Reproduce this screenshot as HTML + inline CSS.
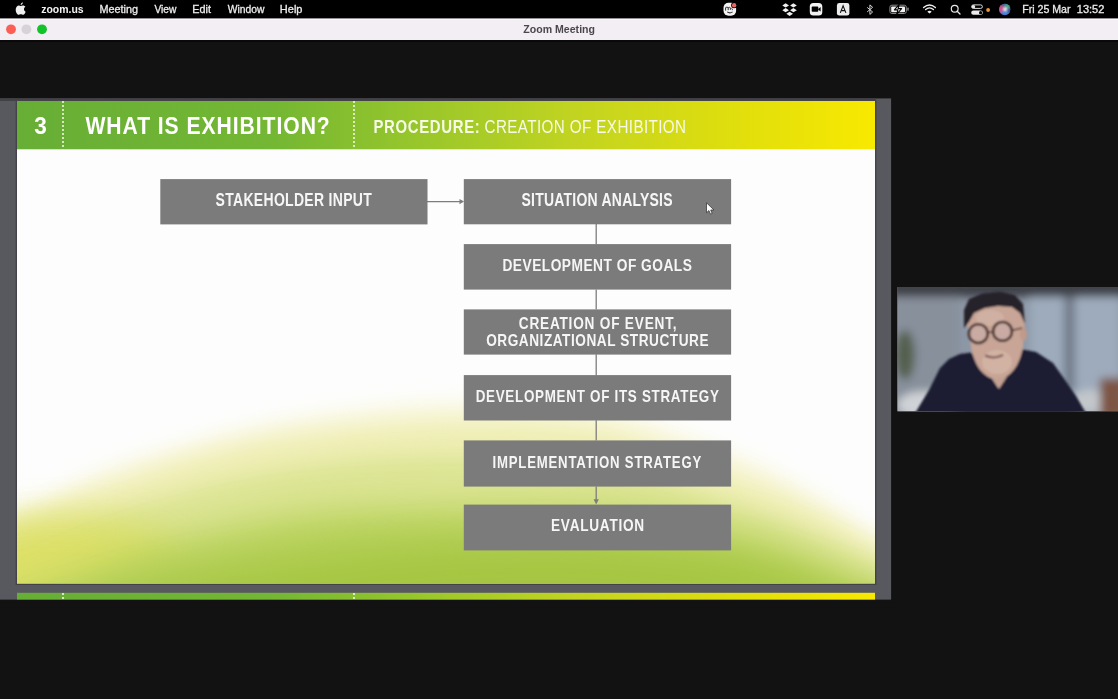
<!DOCTYPE html>
<html><head><meta charset="utf-8">
<style>
*{margin:0;padding:0}
html,body{width:1118px;height:699px;overflow:hidden;background:#121212}
svg{position:absolute;left:0;top:0;display:block}
text{font-family:"Liberation Sans",sans-serif;white-space:pre}
</style></head>
<body>
<svg width="1118" height="699" viewBox="0 0 1118 699">
<defs>
  <linearGradient id="hdrg" x1="17" y1="0" x2="875" y2="0" gradientUnits="userSpaceOnUse">
    <stop offset="0" stop-color="#67ae36"/>
    <stop offset="0.3" stop-color="#74b733"/>
    <stop offset="0.45" stop-color="#94c52c"/>
    <stop offset="0.65" stop-color="#c2d420"/>
    <stop offset="0.85" stop-color="#e2df0c"/>
    <stop offset="1" stop-color="#f8e900"/>
  </linearGradient>
  <filter id="blur30" x="-50%" y="-50%" width="200%" height="200%"><feGaussianBlur stdDeviation="30"/></filter>
  <filter id="blur18" x="-50%" y="-50%" width="200%" height="200%"><feGaussianBlur stdDeviation="18"/></filter>
  <filter id="blur10" x="-50%" y="-50%" width="200%" height="200%"><feGaussianBlur stdDeviation="10"/></filter>
  <filter id="blur4" x="-50%" y="-50%" width="200%" height="200%"><feGaussianBlur stdDeviation="4"/></filter>
  <filter id="blur2" x="-50%" y="-50%" width="200%" height="200%"><feGaussianBlur stdDeviation="2"/></filter>
  <filter id="blur1" x="-50%" y="-50%" width="200%" height="200%"><feGaussianBlur stdDeviation="1"/></filter>
  <filter id="blur13" x="-50%" y="-50%" width="200%" height="200%"><feGaussianBlur stdDeviation="1.2"/></filter>
  <filter id="noop" x="0" y="0" width="1118" height="699" filterUnits="userSpaceOnUse"><feGaussianBlur stdDeviation="0.3"/></filter>
  <clipPath id="slideclip"><rect x="17" y="101" width="858" height="482.3"/></clipPath>
  <clipPath id="vidclip"><rect x="897.5" y="287" width="220.5" height="124.3"/></clipPath>
</defs>
<rect x="0" y="0" width="1118" height="699" fill="#121212"/>
<!-- menubar -->
<rect x="0" y="0" width="1118" height="18.4" fill="#000"/>
<!-- titlebar -->
<rect x="0" y="18.4" width="1118" height="21.7" fill="#f2eef3"/>
<rect x="0" y="19.2" width="1118" height="0.8" fill="#fbf9fb"/>
<rect x="0" y="40.1" width="1118" height="1.6" fill="#070707"/>
<circle cx="11" cy="29.3" r="4.9" fill="#fc5d55"/>
<circle cx="26.4" cy="29.3" r="4.9" fill="#d7d2d7"/>
<circle cx="42" cy="29.3" r="4.9" fill="#12c229"/>

<!-- share frame -->
<rect x="0" y="98.4" width="891.1" height="501.4" fill="#58595e"/>
<rect x="0" y="98.4" width="876" height="2.6" fill="#414244"/>
<rect x="15.6" y="100" width="860.8" height="485" fill="#444349"/>
<g clip-path="url(#slideclip)">
  <rect x="17" y="101" width="858" height="482.3" fill="#fdfdfd"/>
  <path d="M-80.0,558.7 L-72.4,555.1 L-62.2,550.2 L-50.1,544.3 L-36.7,537.9 L-22.6,531.1 L-8.5,524.3 L4.9,517.8 L17.0,512.0 L27.9,506.6 L38.3,501.3 L48.4,496.2 L58.3,491.1 L68.2,486.1 L78.4,481.3 L88.9,476.6 L100.0,472.0 L111.7,467.5 L123.8,463.2 L136.3,459.0 L148.9,454.9 L161.8,450.9 L174.6,447.1 L187.4,443.5 L200.0,440.0 L212.2,436.7 L223.8,433.6 L235.3,430.7 L246.9,427.9 L258.8,425.3 L271.5,422.8 L285.1,420.3 L300.0,418.0 L316.4,415.6 L334.0,413.2 L352.6,410.9 L371.9,408.6 L391.6,406.6 L411.3,405.0 L430.9,403.7 L450.0,403.0 L468.9,402.7 L487.9,402.6 L507.1,402.8 L526.2,403.4 L545.1,404.4 L563.8,406.0 L582.2,408.2 L600.0,411.0 L617.7,414.8 L635.5,419.5 L653.2,425.0 L670.6,430.9 L687.3,437.1 L703.1,443.1 L717.7,448.9 L731.0,454.0 L742.6,458.5 L752.6,462.7 L761.3,466.7 L769.2,470.5 L776.7,474.3 L784.1,478.3 L791.7,482.5 L800.0,487.0 L808.7,491.8 L817.2,496.8 L825.7,501.9 L834.2,507.2 L843.0,512.6 L851.9,518.2 L861.2,524.0 L871.0,530.0 L881.9,536.6 L894.1,544.0 L907.0,551.8 L919.9,559.6 L932.4,567.2 L943.6,574.0 L953.0,579.7 L960.0,583.9 L960,740 L-80,740 Z" fill="#f8f6d8" filter="url(#blur10)" opacity="1"/>
<path d="M-80.0,568.1 L-72.4,564.8 L-62.2,560.4 L-50.1,555.1 L-36.7,549.3 L-22.6,543.2 L-8.5,537.1 L4.9,531.3 L17.0,526.0 L27.9,521.2 L38.3,516.5 L48.4,511.9 L58.3,507.4 L68.2,503.0 L78.4,498.6 L88.9,494.3 L100.0,490.0 L111.7,485.6 L123.8,481.3 L136.3,476.9 L148.9,472.6 L161.8,468.4 L174.6,464.3 L187.4,460.5 L200.0,457.0 L212.2,453.7 L223.8,450.7 L235.3,447.9 L246.9,445.2 L258.8,442.8 L271.5,440.4 L285.1,438.2 L300.0,436.0 L316.4,433.8 L334.0,431.7 L352.6,429.6 L371.9,427.7 L391.6,426.0 L411.3,424.6 L430.9,423.6 L450.0,423.0 L468.9,422.7 L487.9,422.7 L507.1,422.8 L526.2,423.4 L545.1,424.4 L563.8,425.9 L582.2,428.1 L600.0,431.0 L617.7,435.0 L635.5,440.0 L653.2,445.9 L670.6,452.2 L687.3,458.7 L703.1,465.1 L717.7,470.9 L731.0,476.0 L742.6,480.2 L752.6,483.9 L761.3,487.2 L769.2,490.3 L776.7,493.4 L784.1,496.6 L791.7,500.0 L800.0,504.0 L808.7,508.4 L817.2,512.9 L825.7,517.7 L834.2,522.6 L843.0,527.7 L851.9,533.0 L861.2,538.4 L871.0,544.0 L881.9,550.1 L894.1,557.0 L907.0,564.3 L919.9,571.6 L932.4,578.6 L943.6,584.9 L953.0,590.2 L960.0,594.1 L960,740 L-80,740 Z" fill="#eeeeb4" filter="url(#blur10)" opacity="1"/>
<path d="M-80.0,589.9 L-72.8,587.1 L-63.4,583.4 L-52.3,579.1 L-39.8,574.2 L-26.3,568.9 L-12.1,563.4 L2.5,557.7 L17.0,552.0 L31.8,546.1 L47.3,539.6 L63.5,532.7 L80.2,525.8 L97.3,518.8 L114.7,512.1 L132.3,505.7 L150.0,500.0 L167.9,494.7 L186.3,489.7 L205.0,484.9 L223.9,480.4 L243.0,476.3 L262.1,472.5 L281.1,469.0 L300.0,466.0 L318.8,463.4 L337.5,461.2 L356.2,459.3 L375.0,457.8 L393.8,456.6 L412.5,455.8 L431.2,455.3 L450.0,455.0 L468.9,455.0 L487.9,455.1 L507.1,455.6 L526.2,456.4 L545.1,457.5 L563.8,459.2 L582.2,461.3 L600.0,464.0 L617.7,467.5 L635.5,472.0 L653.2,477.0 L670.6,482.5 L687.3,488.1 L703.1,493.5 L717.7,498.6 L731.0,503.0 L742.6,506.7 L752.6,510.0 L761.3,513.0 L769.2,515.8 L776.7,518.6 L784.1,521.4 L791.7,524.5 L800.0,528.0 L808.7,531.8 L817.2,535.7 L825.7,539.7 L834.2,543.9 L843.0,548.2 L851.9,552.7 L861.2,557.3 L871.0,562.0 L881.9,567.2 L894.1,573.0 L907.0,579.2 L919.9,585.4 L932.4,591.4 L943.6,596.8 L953.0,601.3 L960.0,604.6 L960,740 L-80,740 Z" fill="#dde595" filter="url(#blur10)" opacity="1"/>
<ellipse cx="60" cy="572" rx="130" ry="55" fill="#dcdf62" filter="url(#blur18)" opacity="0.9"/>
<path d="M-80.0,637.9 L-72.8,635.1 L-63.4,631.4 L-52.3,627.1 L-39.8,622.2 L-26.3,616.9 L-12.1,611.4 L2.5,605.7 L17.0,600.0 L31.8,594.0 L47.3,587.5 L63.5,580.7 L80.2,573.7 L97.3,566.7 L114.7,560.0 L132.3,553.7 L150.0,548.0 L167.9,542.8 L186.3,537.8 L205.0,533.1 L223.9,528.7 L243.0,524.6 L262.1,521.0 L281.1,517.8 L300.0,515.0 L318.8,512.8 L337.5,511.2 L356.2,510.1 L375.0,509.3 L393.8,508.8 L412.5,508.5 L431.2,508.3 L450.0,508.0 L468.9,507.7 L488.1,507.5 L507.3,507.4 L526.6,507.4 L545.6,507.7 L564.3,508.2 L582.4,508.9 L600.0,510.0 L617.2,511.4 L634.2,513.2 L650.9,515.3 L667.2,517.6 L682.9,520.0 L697.9,522.6 L711.9,525.3 L725.0,528.0 L736.8,530.7 L747.4,533.6 L757.0,536.6 L765.9,539.6 L774.4,542.8 L782.7,546.1 L791.2,549.5 L800.0,553.0 L808.9,556.6 L817.6,560.3 L826.1,564.1 L834.6,568.1 L843.2,572.1 L852.1,576.3 L861.3,580.6 L871.0,585.0 L881.9,589.9 L894.1,595.4 L907.0,601.2 L919.9,607.1 L932.4,612.7 L943.6,617.7 L953.0,622.0 L960.0,625.1 L960,740 L-80,740 Z" fill="#b8d25c" filter="url(#blur18)" opacity="1"/>
<path d="M-80.0,651.5 L-73.1,649.6 L-64.6,647.3 L-54.5,644.5 L-42.9,641.4 L-29.9,637.8 L-15.6,633.9 L0.1,629.6 L17.0,625.0 L35.3,619.7 L55.1,613.7 L76.4,607.1 L98.9,600.2 L122.7,593.3 L147.5,586.6 L173.3,580.5 L200.0,575.0 L228.0,570.0 L257.8,565.2 L288.8,560.7 L320.8,556.4 L353.3,552.7 L385.9,549.4 L418.3,546.8 L450.0,545.0 L481.8,543.8 L514.4,543.2 L547.2,543.1 L579.9,543.6 L612.0,544.7 L643.1,546.5 L672.5,548.9 L700.0,552.0 L725.7,556.2 L750.2,561.7 L773.5,568.0 L795.6,574.9 L816.4,581.9 L835.9,588.7 L854.1,594.8 L871.0,600.0 L886.7,604.4 L901.1,608.4 L914.3,612.2 L926.2,615.5 L936.7,618.5 L945.9,621.0 L953.7,623.2 L960.0,625.0 L960,740 L-80,740 Z" fill="#a6c642" filter="url(#blur18)" opacity="1"/>
  <rect x="17" y="101" width="858" height="48.3" fill="url(#hdrg)"/>
  <line x1="63" y1="100.9" x2="63" y2="149.3" stroke="#f2f7e0" stroke-width="1.6" stroke-dasharray="2 2"/>
  <line x1="354" y1="100.9" x2="354" y2="149.3" stroke="#f2f7e0" stroke-width="1.6" stroke-dasharray="2 2"/>
  <!-- connectors -->
  <g stroke="#7d7d7d" stroke-width="1.3">
    <line x1="427" y1="201.6" x2="460" y2="201.6"/>
    <line x1="596.2" y1="224" x2="596.2" y2="244.5"/>
    <line x1="596.2" y1="289.5" x2="596.2" y2="309.5"/>
    <line x1="596.2" y1="354.3" x2="596.2" y2="375.2"/>
    <line x1="596.2" y1="420.2" x2="596.2" y2="440.5"/>
    <line x1="596.2" y1="486.5" x2="596.2" y2="500"/>
  </g>
  <path d="M459.5 198.9 L464 201.6 L459.5 204.3 Z" fill="#7d7d7d"/>
  <path d="M593.6 499.2 L598.8 499.2 L596.2 504.5 Z" fill="#7d7d7d"/>
  <g fill="#7b7b7b">
    <rect x="160.3" y="179.1" width="267.2" height="45.3"/>
    <rect x="463.8" y="179.1" width="267.3" height="45.2"/>
    <rect x="463.8" y="244.1" width="267.3" height="45.5"/>
    <rect x="463.8" y="309.4" width="267.3" height="45.2"/>
    <rect x="463.8" y="375.1" width="267.3" height="45.4"/>
    <rect x="463.8" y="440.4" width="267.3" height="46.2"/>
    <rect x="463.8" y="504.6" width="267.3" height="45.8"/>
  </g>
</g>
<rect x="17" y="592.8" width="858" height="7" fill="url(#hdrg)"/>
<line x1="63" y1="593" x2="63" y2="600" stroke="#f2f7e0" stroke-width="1.6" stroke-dasharray="2 2"/>
<line x1="354" y1="593" x2="354" y2="600" stroke="#f2f7e0" stroke-width="1.6" stroke-dasharray="2 2"/>
<rect x="0" y="599.8" width="900" height="3" fill="#121212"/>

<path d="M706.5 202.8 L706.5 212.8 L708.9 210.6 L710.5 214.2 L712.2 213.4 L710.7 210.0 L714.0 210.0 Z" fill="#ffffff" stroke="#3a3a3a" stroke-width="0.8" stroke-linejoin="round"/>
<!-- video -->
<g clip-path="url(#vidclip)">
  <rect x="897" y="287" width="221" height="125" fill="#8d98a7"/>
  <g filter="url(#blur4)">
    <rect x="880" y="280" width="250" height="17" fill="#3c4047"/>
    <rect x="880" y="297" width="80" height="120" fill="#87909b"/>
    <rect x="1030" y="297" width="90" height="100" fill="#9eabbc"/>
    <rect x="1064" y="297" width="11" height="95" fill="#6f7a88"/>
    <ellipse cx="905" cy="355" rx="10" ry="25" fill="#55604f"/>
    <ellipse cx="925" cy="405" rx="28" ry="14" fill="#cfd2d6"/>
    <ellipse cx="1090" cy="402" rx="20" ry="12" fill="#c3c7cc"/>
    <rect x="1100" y="378" width="25" height="40" fill="#7d5444"/>
  </g>
  <g filter="url(#blur13)">
    <path d="M914 415 L929 390 L940 368 L949 359 L960 354 L971 352.5 L985 368 L998 388 L1008 372 L1020 349 L1036 352 L1053 363 L1065 380 L1076 396 L1087 415 Z" fill="#1c1f33"/>
    <path d="M971 346 C975 366 986 378 997 379 C1009 379 1019 366 1023 346 L1021 349 L1010 372 L999 389 L988 372 Z" fill="#c4a091"/>
    <path d="M967 322 C967 300 1025 298 1025 320 L1023 346 C1020 366 1010 379 997 379 C984 379 974 366 971 346 Z" fill="#c8a596"/>
    <ellipse cx="1023.5" cy="334" rx="3.5" ry="7" fill="#c09a8a"/>
    <ellipse cx="997" cy="362" rx="15" ry="12" fill="#d2b2a2"/>
    <ellipse cx="990" cy="318" rx="14" ry="8" fill="#cfb0a2"/>
    <path d="M964 328 L964 310 L969 299 L982 293.5 L1000 291.5 L1015 295 L1023 304 L1025 324 L1020 313 L1012 307 L998 306 L985 308 L974 313 L969 322 Z" fill="#27232a"/>
    <path d="M985 355.5 Q994 359.5 1003 355" stroke="#7a5252" stroke-width="2" fill="none"/>
    <circle cx="978.3" cy="333.6" r="9.4" fill="#cdb8c4" fill-opacity="0.3" stroke="#47302f" stroke-width="2.6"/>
    <circle cx="1002.5" cy="331.4" r="9.4" fill="#cdb8c4" fill-opacity="0.3" stroke="#47302f" stroke-width="2.6"/>
    <line x1="987.7" y1="332.5" x2="993.1" y2="332" stroke="#4e3634" stroke-width="1.6"/>
    <line x1="1011.8" y1="330.5" x2="1022" y2="328" stroke="#4e3634" stroke-width="1.6"/>
  </g>
</g>

<!-- menubar icons -->
<g id="icons">
  <!-- apple -->
  <g fill="#efefef" transform="translate(15.6,2.0)">
    <path d="M5.0 3.9 C5.8 3.9 6.5 3.4 7.4 3.4 C8.5 3.4 9.3 4.0 9.8 4.8 C8.9 5.3 8.4 6.2 8.4 7.2 C8.4 8.4 9.1 9.3 10.0 9.7 C9.7 10.8 8.7 12.8 7.5 12.8 C6.7 12.8 6.4 12.3 5.2 12.3 C4.0 12.3 3.6 12.8 2.9 12.8 C1.7 12.8 0.1 10.2 0.1 7.8 C0.1 5.1 1.7 3.4 3.3 3.4 C4.0 3.4 4.5 3.9 5.0 3.9 Z"/>
    <path d="M5.0 3.1 C5.0 1.9 6.0 0.5 7.3 0.2 C7.4 1.4 6.4 2.9 5.0 3.1 Z"/>
  </g>
  <!-- ms face -->
  <rect x="723.5" y="2.8" width="12.6" height="12.9" rx="5" fill="#f4f4f4"/>
  <path d="M725.6 10.6 L725.6 7.6 Q727 6.6 728.2 7.6 L728.2 10.2 M728.2 7.8 Q729.4 6.8 730.4 7.8 L730.4 9.8" stroke="#333" stroke-width="1" fill="none"/>
  <path d="M731.3 8.2 Q733 8.6 732.3 10.2" stroke="#444" stroke-width="0.9" fill="none"/>
  <path d="M727.2 11.9 Q729.8 13.8 732.6 11.9" stroke="#333" stroke-width="1.1" fill="none"/>
  <circle cx="734.1" cy="5.2" r="3.0" fill="#000"/>
  <circle cx="734.1" cy="5.2" r="2.2" fill="#ec6565"/>
  <!-- dropbox -->
  <g fill="#f0f0f0">
    <path d="M782.3 5.4 L785.6 3.3 L789 5.4 L785.6 7.5 Z"/>
    <path d="M790.1 5.4 L793.4 3.3 L796.8 5.4 L793.4 7.5 Z"/>
    <path d="M782.3 10.2 L785.6 8.1 L789 10.2 L785.6 12.3 Z"/>
    <path d="M790.1 10.2 L793.4 8.1 L796.8 10.2 L793.4 12.3 Z"/>
    <path d="M786.3 13.8 L789.6 11.7 L793 13.8 L789.6 15.9 Z"/>
  </g>
  <!-- zoom cam -->
  <rect x="809.8" y="2.9" width="12.5" height="12.7" rx="3.6" fill="#f2f2f2"/>
  <rect x="811.7" y="6.6" width="6.6" height="5.2" rx="0.8" fill="#000"/>
  <path d="M817.8 9.2 L820.6 6.9 L820.6 11.5 Z" fill="#000"/>
  <!-- A -->
  <rect x="836.9" y="3.1" width="12.5" height="12.5" rx="2.4" fill="#ececec"/>
  <path d="M840.3 12.9 L843.1 5.8 L845.9 12.9 M841.3 10.6 L844.9 10.6" stroke="#111" stroke-width="1.1" fill="none"/>
  <!-- bluetooth -->
  <path d="M867.2 7.4 L872.6 12.0 L869.9 14.4 L869.9 4.9 L872.6 7.3 L867.2 11.9" stroke="#d4d4d4" stroke-width="1.0" fill="none" stroke-linejoin="round"/>
  <!-- battery -->
  <rect x="889.9" y="5.2" width="16.4" height="8.3" rx="2" fill="none" stroke="#8a8a8a" stroke-width="1"/>
  <rect x="891.2" y="6.5" width="13.8" height="5.7" rx="0.8" fill="#f2f2f2"/>
  <rect x="907.3" y="7.6" width="1.4" height="3.2" rx="0.6" fill="#8a8a8a"/>
  <path d="M899.2 4.4 L894.4 9.9 L897.9 9.9 L896.5 14.6 L901.6 8.6 L898.1 8.6 Z" fill="#f2f2f2" stroke="#000" stroke-width="1.1" stroke-linejoin="round"/>
  <!-- wifi -->
  <g fill="none" stroke="#f0f0f0" stroke-width="1.35" stroke-linecap="round">
    <path d="M923.6 7.6 Q929.5 2.3 935.4 7.6"/>
    <path d="M925.6 9.6 Q929.5 6.2 933.4 9.6"/>
  </g>
  <path d="M927.3 11.7 Q929.5 9.9 931.7 11.7 L929.5 13.6 Z" fill="#f0f0f0"/>
  <!-- search -->
  <circle cx="954.7" cy="8.7" r="3.4" fill="none" stroke="#e8e8e8" stroke-width="1.2"/>
  <line x1="957.2" y1="11.2" x2="960.0" y2="14.0" stroke="#e8e8e8" stroke-width="1.3" stroke-linecap="round"/>
  <!-- control center -->
  <rect x="971.6" y="4.9" width="10.8" height="3.5" rx="1.75" fill="none" stroke="#dcdcdc" stroke-width="1"/>
  <circle cx="973.5" cy="6.65" r="1.7" fill="#e8e8e8"/>
  <rect x="971.2" y="10.5" width="11.6" height="4.3" rx="2.15" fill="#ececec"/>
  <circle cx="980.6" cy="12.65" r="1.6" fill="#000"/>
  <circle cx="988.1" cy="10" r="1.9" fill="#e8963a"/>
  <!-- siri -->
  <defs><clipPath id="siriclip"><circle cx="1004.8" cy="9.4" r="5.8"/></clipPath></defs>
  <g clip-path="url(#siriclip)">
    <circle cx="1004.8" cy="9.4" r="6" fill="#3a4a8a"/>
    <g filter="url(#blur1)">
      <ellipse cx="1001" cy="9" rx="3.2" ry="4" fill="#d04f90"/>
      <ellipse cx="1007.5" cy="6" rx="3.5" ry="2.8" fill="#3fa38a"/>
      <ellipse cx="1005" cy="13" rx="4" ry="2.6" fill="#4a86d8"/>
      <circle cx="1005.3" cy="9.3" r="1.8" fill="#ffffff"/>
    </g>
  </g>
</g>

<g filter="url(#noop)">
<text x="41.18" y="12.80" font-size="11.00" font-weight="bold" fill="#f2f2f2" textLength="42.50" lengthAdjust="spacingAndGlyphs">zoom.us</text>
<text x="99.43" y="12.70" font-size="10.72" font-weight="normal" fill="#ececec" textLength="38.53" lengthAdjust="spacingAndGlyphs" stroke="#ececec" stroke-width="0.3">Meeting</text>
<text x="154.40" y="12.70" font-size="10.72" font-weight="normal" fill="#ececec" textLength="22.07" lengthAdjust="spacingAndGlyphs" stroke="#ececec" stroke-width="0.3">View</text>
<text x="192.33" y="12.70" font-size="10.72" font-weight="normal" fill="#ececec" textLength="18.70" lengthAdjust="spacingAndGlyphs" stroke="#ececec" stroke-width="0.3">Edit</text>
<text x="227.70" y="12.70" font-size="10.72" font-weight="normal" fill="#ececec" textLength="36.67" lengthAdjust="spacingAndGlyphs" stroke="#ececec" stroke-width="0.3">Window</text>
<text x="279.82" y="12.70" font-size="10.72" font-weight="normal" fill="#ececec" textLength="22.63" lengthAdjust="spacingAndGlyphs" stroke="#ececec" stroke-width="0.3">Help</text>
<text x="1022.15" y="12.80" font-size="10.72" font-weight="normal" fill="#ececec" textLength="48.39" lengthAdjust="spacingAndGlyphs" stroke="#ececec" stroke-width="0.3">Fri 25 Mar</text>
<text x="1076.77" y="12.80" font-size="10.72" font-weight="normal" fill="#ececec" textLength="27.64" lengthAdjust="spacingAndGlyphs" stroke="#ececec" stroke-width="0.3">13:52</text>
<text x="523.34" y="32.60" font-size="10.07" font-weight="bold" fill="#4a474b" textLength="71.66" lengthAdjust="spacingAndGlyphs">Zoom Meeting</text>
<text x="34.15" y="134.00" font-size="24.60" font-weight="bold" fill="#ffffff" textLength="12.57" lengthAdjust="spacingAndGlyphs">3</text>
<text transform="translate(85.40,134.00) scale(0.86,1)" x="0" y="0" font-size="24.60" font-weight="bold" fill="#ffffff" letter-spacing="1.087">WHAT IS EXHIBITION?</text>
<text transform="translate(373.43,132.90) scale(0.83,1)" x="0" y="0" font-size="17.99" font-weight="bold" fill="#f6fae6" letter-spacing="0.804">PROCEDURE:</text>
<text transform="translate(484.54,132.90) scale(0.84,1)" x="0" y="0" font-size="18.12" font-weight="normal" fill="#f6fae6" letter-spacing="0.471">CREATION OF EXHIBITION</text>
<text transform="translate(215.55,205.80) scale(0.79,1)" x="0" y="0" font-size="17.70" font-weight="bold" fill="#f6f6f6" letter-spacing="0.405">STAKEHOLDER INPUT</text>
<text transform="translate(521.55,205.80) scale(0.79,1)" x="0" y="0" font-size="17.70" font-weight="bold" fill="#f6f6f6" letter-spacing="0.296">SITUATION ANALYSIS</text>
<text transform="translate(502.41,271.40) scale(0.79,1)" x="0" y="0" font-size="17.41" font-weight="bold" fill="#f6f6f6" letter-spacing="0.624">DEVELOPMENT OF GOALS</text>
<text transform="translate(518.75,329.00) scale(0.79,1)" x="0" y="0" font-size="17.27" font-weight="bold" fill="#f6f6f6" letter-spacing="0.998">CREATION OF EVENT,</text>
<text transform="translate(486.15,346.00) scale(0.79,1)" x="0" y="0" font-size="17.27" font-weight="bold" fill="#f6f6f6" letter-spacing="0.680">ORGANIZATIONAL STRUCTURE</text>
<text transform="translate(475.63,401.60) scale(0.79,1)" x="0" y="0" font-size="16.98" font-weight="bold" fill="#f6f6f6" letter-spacing="0.902">DEVELOPMENT OF ITS STRATEGY</text>
<text transform="translate(492.44,468.40) scale(0.79,1)" x="0" y="0" font-size="16.69" font-weight="bold" fill="#f6f6f6" letter-spacing="1.032">IMPLEMENTATION STRATEGY</text>
<text transform="translate(551.01,531.30) scale(0.84,1)" x="0" y="0" font-size="16.26" font-weight="bold" fill="#f6f6f6" letter-spacing="0.854">EVALUATION</text>
</g>
</svg>
</body></html>
